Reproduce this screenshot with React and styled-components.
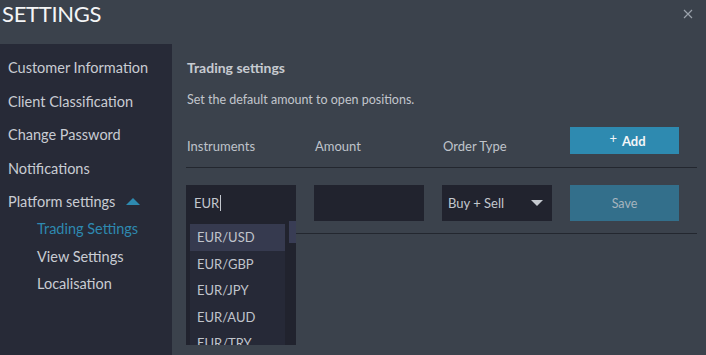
import React from "react";
import styled, { createGlobalStyle } from "styled-components";

const Global = createGlobalStyle`
  html, body { margin: 0; padding: 0; background: #3b424c; }
  body { font-family: Lato, "Open Sans", sans-serif; }
  * { box-sizing: border-box; }
`;

const Page = styled.div`
  width: 706px;
  height: 355px;
  background: #3b424c;
  display: flex;
  flex-direction: column;
  overflow: hidden;
  font-family: Lato, sans-serif;
`;

const Header = styled.div`
  height: 44px;
  flex: none;
  display: flex;
  align-items: center;
  justify-content: space-between;
  padding: 0 13px 18px 2px;
`;

const Title = styled.h1`
  margin: 0;
  font-size: 22px;
  font-weight: 400;
  color: #f4f5f6;
  letter-spacing: -0.3px;
`;

const Close = styled.button`
  border: 0;
  background: none;
  padding: 0;
  width: 10px;
  height: 10px;
  display: flex;
  margin-top: 2px;
`;

const Body = styled.div`
  flex: 1;
  display: flex;
  min-height: 0;
`;

const Sidebar = styled.nav`
  width: 172px;
  flex: none;
  background: #272a37;
  padding-top: 7px;
  display: flex;
  flex-direction: column;
`;

const NavItem = styled.div`
  height: 33.5px;
  display: flex;
  align-items: center;
  padding-left: 8px;
  font-size: 14.5px;
  color: #c9ccd3;
  gap: 11px;
`;

const SubList = styled.div`
  margin-top: -3.5px;
  display: flex;
  flex-direction: column;
`;

const SubItem = styled.div`
  height: 27.5px;
  display: flex;
  align-items: center;
  padding-left: 37px;
  font-size: 14.5px;
  color: ${(p) => (p.$active ? "#2e89b0" : "#c9ccd3")};
`;

const Caret = styled.span`
  width: 0;
  height: 0;
  border-left: 7px solid transparent;
  border-right: 7px solid transparent;
  border-bottom: 7px solid #2e8ab0;
  margin-top: -1px;
`;

const Main = styled.main`
  flex: 1;
  padding: 15px 9px 0 14px;
  display: flex;
  flex-direction: column;
`;

const SectionTitle = styled.h2`
  margin: 0 0 0 1px;
  font-size: 14px;
  font-weight: 700;
  color: #c7cbd1;
  line-height: 18px;
`;

const Desc = styled.p`
  margin: 14px 0 0 1px;
  font-size: 12.5px;
  color: #c2c6cc;
  line-height: 18px;
`;

const Grid = styled.div`
  display: grid;
  grid-template-columns: 110px 110px 110px 109px 1fr;
  column-gap: 18px;
  align-items: center;
`;

const HeadRow = styled(Grid)`
  margin-top: 18px;
  height: 41px;
  border-bottom: 1px solid #23272f;
  padding-bottom: 13px;
  align-items: end;
`;

const ColHead = styled.div`
  font-size: 13px;
  color: #bfc3ca;
  padding-left: 1px;
  line-height: 16px;
`;

const AddButton = styled.button`
  height: 27px;
  border: 0;
  background: #2e8ab0;
  color: #f4f6f8;
  font-family: Lato, sans-serif;
  font-size: 13px;
  font-weight: 700;
  display: flex;
  align-items: center;
  justify-content: center;
  gap: 5px;
  padding: 0 0 0 6px;
  align-self: start;
`;

const Plus = styled.span`
  font-weight: 400;
  font-size: 13px;
  margin-top: -5px;
`;

const ValueRow = styled(Grid)`
  margin-top: 17px;
  height: 49px;
  padding-bottom: 13px;
  border-bottom: 1px solid #23272f;
  align-items: stretch;
`;

const Field = styled.div`
  position: relative;
  background: #21232e;
  height: 36px;
  display: flex;
  align-items: center;
  padding-left: 8px;
  font-size: 13px;
  color: #c3c7ce;
`;

const Cursor = styled.span`
  display: inline-block;
  width: 1px;
  height: 16px;
  background: #c3c7ce;
  margin-left: 1px;
`;

const SelectBox = styled(Field)`
  justify-content: space-between;
  padding: 0 8px 0 6px;
`;

const SelectCaret = styled.span`
  width: 0;
  height: 0;
  border-left: 6px solid transparent;
  border-right: 6px solid transparent;
  border-top: 6px solid #c6cad0;
  margin-right: 1px;
`;

const SaveButton = styled.button`
  height: 36px;
  border: 0;
  background: #336f8b;
  color: #a5b4be;
  font-family: Lato, sans-serif;
  font-size: 12.5px;
`;

const Dropdown = styled.div`
  position: absolute;
  left: 0;
  top: 36px;
  width: 110px;
  height: 124px;
  background: #21232e;
  display: flex;
  padding: 3px 0 0 4px;
  overflow: hidden;
  z-index: 2;
`;

const List = styled.div`
  width: 95px;
  flex: none;
  background: #262937;
  display: flex;
  flex-direction: column;
`;

const Option = styled.div`
  height: 26.5px;
  flex: none;
  display: flex;
  align-items: center;
  padding-left: 7px;
  font-size: 13px;
  color: #c0c4cc;
  background: ${(p) => (p.$hl ? "#363a4f" : "transparent")};
`;

const Track = styled.div`
  width: 7px;
  margin-left: 4px;
  margin-top: -4px;
  flex: none;
  position: relative;
`;

const Thumb = styled.div`
  height: 23px;
  background: #393d55;
`;

const options = ["EUR/USD", "EUR/GBP", "EUR/JPY", "EUR/AUD", "EUR/TRY"];

export default function App() {
  return (
    <>
      <Global />
      <Page>
        <Header>
          <Title>SETTINGS</Title>
          <Close aria-label="close">
            <svg width="10" height="10" viewBox="0 0 10 10">
              <path d="M1 1L9 9M9 1L1 9" stroke="#9aa1aa" strokeWidth="1.2" />
            </svg>
          </Close>
        </Header>
        <Body>
          <Sidebar>
            <NavItem>Customer Information</NavItem>
            <NavItem>Client Classification</NavItem>
            <NavItem>Change Password</NavItem>
            <NavItem>Notifications</NavItem>
            <NavItem>
              Platform settings <Caret />
            </NavItem>
            <SubList>
              <SubItem $active>Trading Settings</SubItem>
              <SubItem>View Settings</SubItem>
              <SubItem>Localisation</SubItem>
            </SubList>
          </Sidebar>
          <Main>
            <SectionTitle>Trading settings</SectionTitle>
            <Desc>Set the default amount to open positions.</Desc>
            <HeadRow>
              <ColHead>Instruments</ColHead>
              <ColHead>Amount</ColHead>
              <ColHead>Order Type</ColHead>
              <AddButton>
                <Plus>+</Plus>Add
              </AddButton>
              <span />
            </HeadRow>
            <ValueRow>
              <Field>
                EUR<Cursor />
                <Dropdown>
                  <List>
                    {options.map((o, i) => (
                      <Option key={o} $hl={i === 0}>
                        {o}
                      </Option>
                    ))}
                  </List>
                  <Track>
                    <Thumb />
                  </Track>
                </Dropdown>
              </Field>
              <Field />
              <SelectBox>
                Buy + Sell <SelectCaret />
              </SelectBox>
              <SaveButton>Save</SaveButton>
              <span />
            </ValueRow>
          </Main>
        </Body>
      </Page>
    </>
  );
}
